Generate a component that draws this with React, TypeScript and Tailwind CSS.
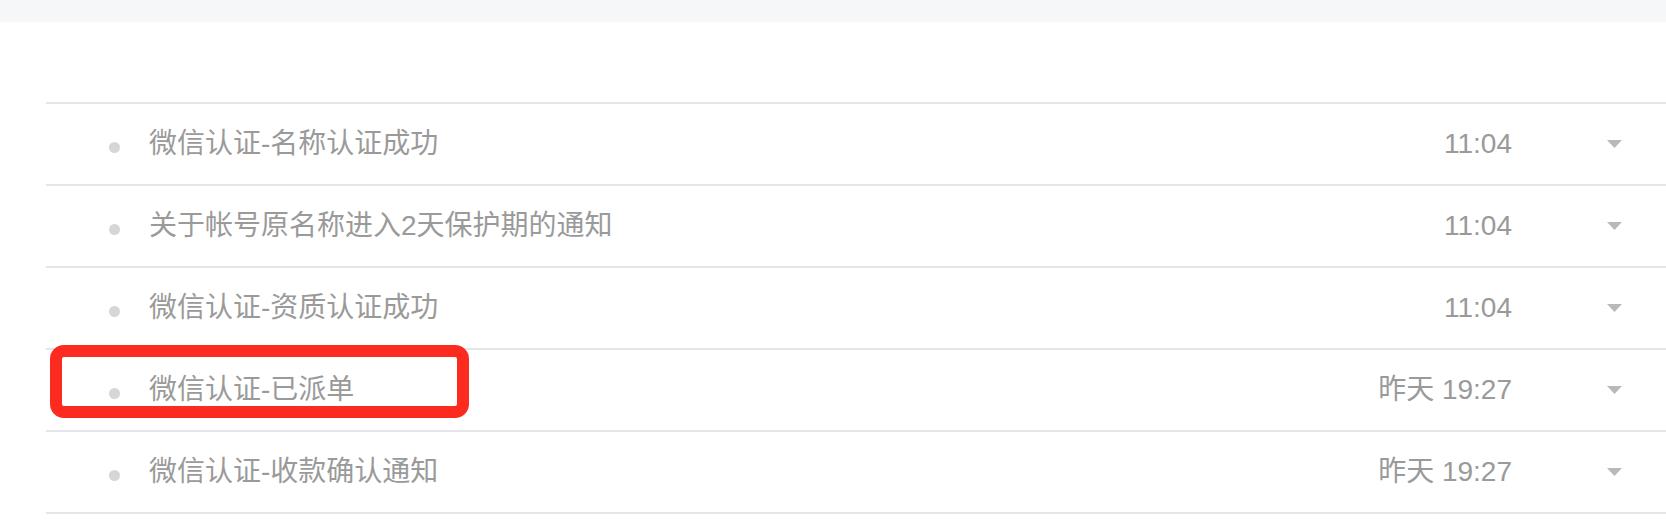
import { type ReactNode } from "react";

type Message = { title: string; time: string; marked?: boolean };

const MESSAGES: Message[] = [
  { title: "微信认证-名称认证成功", time: "11:04" },
  { title: "关于帐号原名称进入2天保护期的通知", time: "11:04" },
  { title: "微信认证-资质认证成功", time: "11:04" },
  { title: "微信认证-已派单", time: "昨天 19:27", marked: true },
  { title: "微信认证-收款确认通知", time: "昨天 19:27" },
];

function Caret() {
  return (
    <svg width="15" height="8" viewBox="0 0 15 8" className="block">
      <path d="M0 0 H15 L7.5 8 Z" fill="#b9b9bc" />
    </svg>
  );
}

function Row({ msg, children }: { msg: Message; children?: ReactNode }) {
  return (
    <li className="relative flex h-[82px] items-center border-b-2 border-[#e6e6ea] pl-[63px] pr-[44px]">
      <span className="mt-1.5 h-[11px] w-[11px] shrink-0 rounded-full bg-[#d6d6d6]" />
      <span className="ml-[29px] flex-1 text-[28px] leading-none text-[#9a9a9a]">{msg.title}</span>
      <span className="text-[28px] leading-none text-[#9a9a9a]">{msg.time}</span>
      <span className="ml-[95px]">
        <Caret />
      </span>
      {children}
    </li>
  );
}

export default function App() {
  return (
    <div
      className="h-[522px] w-full overflow-hidden bg-white"
      style={{ fontFamily: '"Liberation Sans", "Noto Sans CJK SC", sans-serif' }}
    >
      <div className="h-[22px] bg-[#f6f7f9]" />
      <ul className="ml-[46px] mt-[80px] border-t-2 border-[#e6e6ea]">
        {MESSAGES.map((m) => (
          <Row key={m.title} msg={m}>
            {m.marked && (
              <div className="pointer-events-none absolute left-[4px] top-[-5px] h-[73px] w-[419px] rounded-[14px] border-[12px] border-[#fc2b1f]" />
            )}
          </Row>
        ))}
      </ul>
    </div>
  );
}
